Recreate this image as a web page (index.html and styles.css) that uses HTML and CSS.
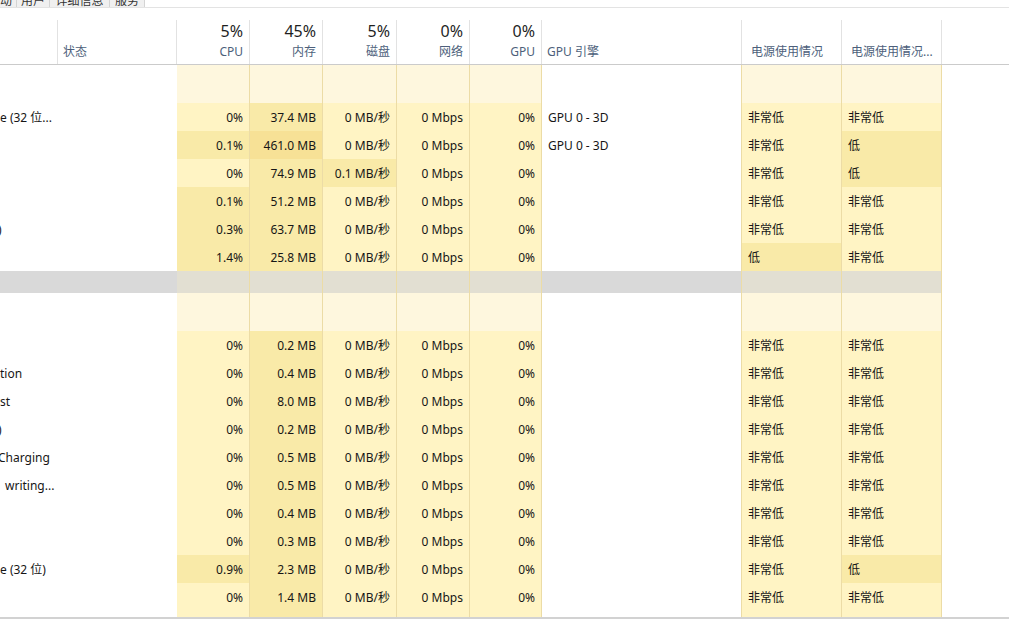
FILE: index.html
```html
<!DOCTYPE html>
<html lang="zh-CN">
<head>
<meta charset="utf-8">
<title>任务管理器</title>
<link rel="stylesheet" href="styles.css">
</head>
<body>
<div class="tabs">
  <div class="tab t1">启动</div>
  <div class="tab t2">用户</div>
  <div class="tab t3">详细信息</div>
  <div class="tab t4">服务</div>
</div>

<div class="table">
  <div class="row head">
    <div class="hc"></div>
    <div class="hc left"><span class="lbl">状态</span></div>
    <div class="hc"><span class="pct">5%</span><span class="lbl">CPU</span></div>
    <div class="hc"><span class="pct">45%</span><span class="lbl">内存</span></div>
    <div class="hc"><span class="pct">5%</span><span class="lbl">磁盘</span></div>
    <div class="hc"><span class="pct">0%</span><span class="lbl">网络</span></div>
    <div class="hc"><span class="pct">0%</span><span class="lbl">GPU</span></div>
    <div class="hc left"><span class="lbl">GPU 引擎</span></div>
    <div class="hc left wide"><span class="lbl">电源使用情况</span></div>
    <div class="hc left wide"><span class="lbl">电源使用情况...</span></div>
    <div class="hc last"></div>
  </div>

  <!-- group 1 -->
  <div class="row grp">
    <div class="c"></div><div class="c"></div>
    <div class="c yg"></div><div class="c yg"></div><div class="c yg"></div><div class="c yg"></div><div class="c yg"></div>
    <div class="c e"></div>
    <div class="c yg"></div><div class="c yg"></div><div class="c"></div>
  </div>

  <div class="row">
    <div class="c nm">e (32 位...</div><div class="c"></div>
    <div class="c r y0">0%</div><div class="c r y1">37.4 MB</div><div class="c r y0">0 MB/秒</div><div class="c r y0">0 Mbps</div><div class="c r y0">0%</div>
    <div class="c l e">GPU 0 - 3D</div>
    <div class="c l y0">非常低</div><div class="c l y0">非常低</div><div class="c"></div>
  </div>
  <div class="row">
    <div class="c nm"></div><div class="c"></div>
    <div class="c r y1">0.1%</div><div class="c r y2">461.0 MB</div><div class="c r y0">0 MB/秒</div><div class="c r y0">0 Mbps</div><div class="c r y0">0%</div>
    <div class="c l e">GPU 0 - 3D</div>
    <div class="c l y0">非常低</div><div class="c l y1">低</div><div class="c"></div>
  </div>
  <div class="row">
    <div class="c nm"></div><div class="c"></div>
    <div class="c r y0">0%</div><div class="c r y1">74.9 MB</div><div class="c r y1">0.1 MB/秒</div><div class="c r y0">0 Mbps</div><div class="c r y0">0%</div>
    <div class="c l e"></div>
    <div class="c l y0">非常低</div><div class="c l y1">低</div><div class="c"></div>
  </div>
  <div class="row">
    <div class="c nm"></div><div class="c"></div>
    <div class="c r y1">0.1%</div><div class="c r y1">51.2 MB</div><div class="c r y0">0 MB/秒</div><div class="c r y0">0 Mbps</div><div class="c r y0">0%</div>
    <div class="c l e"></div>
    <div class="c l y0">非常低</div><div class="c l y0">非常低</div><div class="c"></div>
  </div>
  <div class="row">
    <div class="c nm cut">)</div><div class="c"></div>
    <div class="c r y1">0.3%</div><div class="c r y1">63.7 MB</div><div class="c r y0">0 MB/秒</div><div class="c r y0">0 Mbps</div><div class="c r y0">0%</div>
    <div class="c l e"></div>
    <div class="c l y0">非常低</div><div class="c l y0">非常低</div><div class="c"></div>
  </div>
  <div class="row">
    <div class="c nm"></div><div class="c"></div>
    <div class="c r y1">1.4%</div><div class="c r y1">25.8 MB</div><div class="c r y0">0 MB/秒</div><div class="c r y0">0 Mbps</div><div class="c r y0">0%</div>
    <div class="c l e"></div>
    <div class="c l y1">低</div><div class="c l y0">非常低</div><div class="c"></div>
  </div>

  <!-- highlighted separator row -->
  <div class="row sel">
    <div class="c"></div><div class="c"></div>
    <div class="c yg"></div><div class="c yg"></div><div class="c yg"></div><div class="c yg"></div><div class="c yg"></div>
    <div class="c e"></div>
    <div class="c yg"></div><div class="c yg"></div><div class="c plain"></div>
  </div>

  <!-- group 2 -->
  <div class="row grp">
    <div class="c"></div><div class="c"></div>
    <div class="c yg"></div><div class="c yg"></div><div class="c yg"></div><div class="c yg"></div><div class="c yg"></div>
    <div class="c e"></div>
    <div class="c yg"></div><div class="c yg"></div><div class="c"></div>
  </div>

  <div class="row">
    <div class="c nm"></div><div class="c"></div>
    <div class="c r y0">0%</div><div class="c r y1">0.2 MB</div><div class="c r y0">0 MB/秒</div><div class="c r y0">0 Mbps</div><div class="c r y0">0%</div>
    <div class="c l e"></div>
    <div class="c l y0">非常低</div><div class="c l y0">非常低</div><div class="c"></div>
  </div>
  <div class="row">
    <div class="c nm">tion</div><div class="c"></div>
    <div class="c r y0">0%</div><div class="c r y1">0.4 MB</div><div class="c r y0">0 MB/秒</div><div class="c r y0">0 Mbps</div><div class="c r y0">0%</div>
    <div class="c l e"></div>
    <div class="c l y0">非常低</div><div class="c l y0">非常低</div><div class="c"></div>
  </div>
  <div class="row">
    <div class="c nm">st</div><div class="c"></div>
    <div class="c r y0">0%</div><div class="c r y1">8.0 MB</div><div class="c r y0">0 MB/秒</div><div class="c r y0">0 Mbps</div><div class="c r y0">0%</div>
    <div class="c l e"></div>
    <div class="c l y0">非常低</div><div class="c l y0">非常低</div><div class="c"></div>
  </div>
  <div class="row">
    <div class="c nm cut">)</div><div class="c"></div>
    <div class="c r y0">0%</div><div class="c r y1">0.2 MB</div><div class="c r y0">0 MB/秒</div><div class="c r y0">0 Mbps</div><div class="c r y0">0%</div>
    <div class="c l e"></div>
    <div class="c l y0">非常低</div><div class="c l y0">非常低</div><div class="c"></div>
  </div>
  <div class="row">
    <div class="c nm cut">Charging</div><div class="c"></div>
    <div class="c r y0">0%</div><div class="c r y1">0.5 MB</div><div class="c r y0">0 MB/秒</div><div class="c r y0">0 Mbps</div><div class="c r y0">0%</div>
    <div class="c l e"></div>
    <div class="c l y0">非常低</div><div class="c l y0">非常低</div><div class="c"></div>
  </div>
  <div class="row">
    <div class="c nm gap">writing...</div><div class="c"></div>
    <div class="c r y0">0%</div><div class="c r y1">0.5 MB</div><div class="c r y0">0 MB/秒</div><div class="c r y0">0 Mbps</div><div class="c r y0">0%</div>
    <div class="c l e"></div>
    <div class="c l y0">非常低</div><div class="c l y0">非常低</div><div class="c"></div>
  </div>
  <div class="row">
    <div class="c nm"></div><div class="c"></div>
    <div class="c r y0">0%</div><div class="c r y1">0.4 MB</div><div class="c r y0">0 MB/秒</div><div class="c r y0">0 Mbps</div><div class="c r y0">0%</div>
    <div class="c l e"></div>
    <div class="c l y0">非常低</div><div class="c l y0">非常低</div><div class="c"></div>
  </div>
  <div class="row">
    <div class="c nm"></div><div class="c"></div>
    <div class="c r y0">0%</div><div class="c r y1">0.3 MB</div><div class="c r y0">0 MB/秒</div><div class="c r y0">0 Mbps</div><div class="c r y0">0%</div>
    <div class="c l e"></div>
    <div class="c l y0">非常低</div><div class="c l y0">非常低</div><div class="c"></div>
  </div>
  <div class="row">
    <div class="c nm">e (32 位)</div><div class="c"></div>
    <div class="c r y1">0.9%</div><div class="c r y1">2.3 MB</div><div class="c r y0">0 MB/秒</div><div class="c r y0">0 Mbps</div><div class="c r y0">0%</div>
    <div class="c l e"></div>
    <div class="c l y0">非常低</div><div class="c l y1">低</div><div class="c"></div>
  </div>
  <div class="row">
    <div class="c nm"></div><div class="c"></div>
    <div class="c r y0">0%</div><div class="c r y1">1.4 MB</div><div class="c r y0">0 MB/秒</div><div class="c r y0">0 Mbps</div><div class="c r y0">0%</div>
    <div class="c l e"></div>
    <div class="c l y0">非常低</div><div class="c l y0">非常低</div><div class="c"></div>
  </div>

  <!-- partially visible next row -->
  <div class="row part">
    <div class="c"></div><div class="c"></div>
    <div class="c y0"></div><div class="c y1"></div><div class="c y0"></div><div class="c y0"></div><div class="c y0"></div>
    <div class="c e"></div>
    <div class="c y0"></div><div class="c y0"></div><div class="c"></div>
  </div>
</div>
<div class="bottom"></div>
</body>
</html>
```

FILE: styles.css
```css
html, body {
  margin: 0;
  padding: 0;
  background: #ffffff;
}

body {
  width: 1009px;
  height: 630px;
  overflow: hidden;
  font-family: "Noto Sans", "Noto Sans CJK SC", sans-serif;
  font-size: 12px;
  color: #161616;
}

/* ---- tab strip (mostly scrolled off the top) ---- */
.tabs {
  display: flex;
  align-items: flex-end;
  height: 7px;
  overflow: hidden;
  border-bottom: 1px solid #e3e3e3;
}

.tab {
  flex: none;
  box-sizing: border-box;
  height: 20px;
  line-height: 14px;
  display: flex;
  align-items: flex-end;
  justify-content: center;
  background: #f0f0f0;
  border: 1px solid #d4d4d4;
  border-bottom: none;
  border-left: none;
  color: #333333;
  font-family: "Noto Sans CJK SC", sans-serif;
  font-size: 12px;
}

.t1 { width: 37px; margin-left: -20px; justify-content: flex-end; padding-right: 4px; }
.t2 { width: 33px; }
.t3 { width: 60px; }
.t4 { width: 35px; }

/* ---- table ---- */
.table {
  margin-top: 12px;
}

.row {
  display: grid;
  grid-template-columns: 58px 119px 73px 73px 74px 73px 72px 200px 100px 100px 1fr;
}

.head {
  height: 45px;
  box-sizing: border-box;
  border-bottom: 1px solid #cbcbcb;
}

.hc {
  box-sizing: border-box;
  border-right: 1px solid #e2e2e2;
  display: flex;
  flex-direction: column;
  align-items: flex-end;
  padding-right: 6px;
  white-space: nowrap;
  overflow: hidden;
}

.hc.left {
  align-items: flex-start;
  padding-right: 0;
  padding-left: 5px;
  padding-top: 24px;
}

.hc.left.wide {
  padding-left: 9px;
}

.hc.last {
  border-right: none;
}

.pct {
  font-size: 16px;
  line-height: 20px;
  margin-top: 1px;
  color: #1f1f1f;
}

.lbl {
  font-size: 12px;
  line-height: 16px;
  margin-top: 3px;
  color: #4d5f7b;
}

.hc.left .lbl {
  margin-top: 0;
}

.c {
  box-sizing: border-box;
  height: 28px;
  padding-top: 1px;
  line-height: 27px;
  white-space: nowrap;
  overflow: hidden;
}

.r { text-align: right; padding-right: 6px; }
.l { padding-left: 6px; }

.nm { padding-left: 0; }
.nm.cut { text-indent: -2px; }
.nm.gap { padding-left: 5px; }

.y0, .y1, .y2, .yg {
  border-right: 1px solid #ecdca6;
}

.y0 { background: #fff4c4; }
.y1 { background: #f9eaa8; }
.y2 { background: #f7e196; }
.yg { background: #fef7de; }

.e {
  border-right: 1px solid #ecdca6;
}

.grp .c {
  height: 38px;
}

.sel .c {
  height: 22px;
  background: #d9d9d9;
}

.sel .c.yg {
  background: #e2dfd2;
}

.sel .c.plain {
  background: #ffffff;
}

.part .c {
  height: 6px;
  padding-top: 0;
}

.bottom {
  height: 2px;
  background: #d2d2d2;
}
```
